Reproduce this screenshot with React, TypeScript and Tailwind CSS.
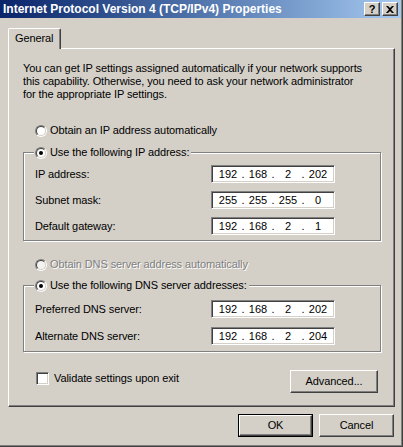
import { Fragment } from 'react';

const raised =
  'border border-t-white border-l-white border-r-[#404040] border-b-[#404040] shadow-[inset_-1px_-1px_0_#808080]';
const sunken =
  'border border-t-[#808080] border-l-[#808080] border-r-white border-b-white shadow-[inset_1px_1px_0_#404040,inset_-1px_-1px_0_#d4d0c8]';

function Radio({ checked, disabled }: { checked?: boolean; disabled?: boolean }) {
  return (
    <span className="inline-flex shrink-0 w-[12px] h-[12px] rounded-full border border-t-[#808080] border-l-[#808080] border-r-white border-b-white">
      <span
        className={`flex items-center justify-center w-full h-full rounded-full border border-t-[#404040] border-l-[#404040] border-r-[#d4d0c8] border-b-[#d4d0c8] ${
          disabled ? 'bg-[#f4f3f0]' : 'bg-white'
        }`}
      >
        {checked && <span className="w-[4px] h-[4px] rounded-full bg-black" />}
      </span>
    </span>
  );
}

function IpField({ value }: { value: string[] }) {
  return (
    <div className={`flex items-center w-[124px] h-[18px] bg-white pl-[5px] tracking-normal ${sunken}`}>
      {value.map((o, i) => (
        <Fragment key={i}>
          {i > 0 && <span className="w-[8px] text-center">.</span>}
          <span className="w-[22px] text-center">{o}</span>
        </Fragment>
      ))}
    </div>
  );
}

function Row({ label, value }: { label: string; value: string[] }) {
  return (
    <div className="flex items-center h-[18px] ml-[11px]">
      <span className="w-[176px]">{label}</span>
      <IpField value={value} />
    </div>
  );
}

function Legend({ text }: { text: string }) {
  return (
    <legend className="ml-[10px] pl-[1px] pr-[2px] bg-[#d4d0c8]">
      <span className="flex items-center gap-[3px] h-[13px]">
        <Radio checked />
        <span>{text}</span>
      </span>
    </legend>
  );
}

export default function App() {
  return (
    <div className="w-[403px] h-[447px] bg-[#d4d0c8] border-r border-b border-[#404040] font-['Liberation_Sans',Arial,sans-serif] text-[11px] leading-[13px] tracking-[-0.1px] text-black">
      <div className="flex flex-col h-full border-r border-b border-[#808080]">
        {/* title bar */}
        <div className="flex items-center h-[18px] shrink-0 bg-linear-to-r from-[#0a246a] to-[#a6caf0] pl-[3px] pr-[3px]">
          <span className="flex-1 text-white font-bold text-[12px] leading-[18px] tracking-normal whitespace-nowrap">
            Internet Protocol Version 4 (TCP/IPv4) Properties
          </span>
          <div className="flex gap-[2px]">
            <button
              className={`flex items-center justify-center w-[16px] h-[14px] bg-[#d4d0c8] font-bold text-[11px] leading-[12px] ${raised}`}
            >
              ?
            </button>
            <button className={`flex items-center justify-center w-[16px] h-[14px] bg-[#d4d0c8] ${raised}`}>
              <svg width="8" height="7" viewBox="0 0 8 7">
                <path d="M0 0h2l2 2 2-2h2L5 3.5 8 7H6L4 5 2 7H0l3-3.5z" fill="#000" />
              </svg>
            </button>
          </div>
        </div>

        {/* tab */}
        <div className="relative z-10 ml-[8px] mt-[10px] -mb-px w-[53px] h-[21px] bg-[#d4d0c8] border-l border-t border-white border-r border-r-[#404040] rounded-tl-[2px] rounded-tr-[2px] shadow-[inset_-1px_0_0_#808080] pl-[6px] pt-[3px]">
          General
        </div>

        {/* panel */}
        <div className="ml-[8px] w-[387px] h-[359px] shrink-0 border border-t-white border-l-white border-r-[#404040] border-b-[#404040] shadow-[inset_-1px_-1px_0_#808080] pt-[13px]">
          <p className="pl-[14px] whitespace-nowrap">
            You can get IP settings assigned automatically if your network supports
            <br />
            this capability. Otherwise, you need to ask your network administrator
            <br />
            for the appropriate IP settings.
          </p>

          <div className="flex items-center gap-[3px] h-[13px] mt-[23px] ml-[26px]">
            <Radio />
            <span>Obtain an IP address automatically</span>
          </div>

          <fieldset className="mt-[9px] ml-[14px] w-[358px] border border-[#808080] shadow-[inset_1px_1px_0_#fff,1px_1px_0_#fff] pt-[6px] pb-[5px]">
            <Legend text="Use the following IP address:" />
            <div className="flex flex-col gap-[8px]">
              <Row label="IP address:" value={['192', '168', '2', '202']} />
              <Row label="Subnet mask:" value={['255', '255', '255', '0']} />
              <Row label="Default gateway:" value={['192', '168', '2', '1']} />
            </div>
          </fieldset>

          <div className="flex items-center gap-[3px] h-[13px] mt-[17px] ml-[26px]">
            <Radio disabled />
            <span className="text-[#808080] [text-shadow:1px_1px_0_#fff]">Obtain DNS server address automatically</span>
          </div>

          <fieldset className="mt-[8px] ml-[14px] w-[358px] border border-[#808080] shadow-[inset_1px_1px_0_#fff,1px_1px_0_#fff] pt-[8px] pb-[6px]">
            <Legend text="Use the following DNS server addresses:" />
            <div className="flex flex-col gap-[9px]">
              <Row label="Preferred DNS server:" value={['192', '168', '2', '202']} />
              <Row label="Alternate DNS server:" value={['192', '168', '2', '204']} />
            </div>
          </fieldset>

          <div className="flex items-start justify-between mt-[18px] pl-[27px] pr-[16px]">
            <label className="flex items-center gap-[5px] mt-[2px]">
              <span className={`w-[13px] h-[13px] bg-white ${sunken}`} />
              <span>Validate settings upon exit</span>
            </label>
            <button className={`w-[88px] h-[23px] bg-[#d4d0c8] ${raised}`}>Advanced...</button>
          </div>
        </div>

        {/* dialog buttons */}
        <div className="flex justify-end gap-[6px] mt-[7px] pr-[7px]">
          <div className="w-[75px] h-[23px] border border-black">
            <button className={`w-full h-full bg-[#d4d0c8] ${raised}`}>OK</button>
          </div>
          <button className={`w-[75px] h-[23px] bg-[#d4d0c8] ${raised}`}>Cancel</button>
        </div>
      </div>
    </div>
  );
}
